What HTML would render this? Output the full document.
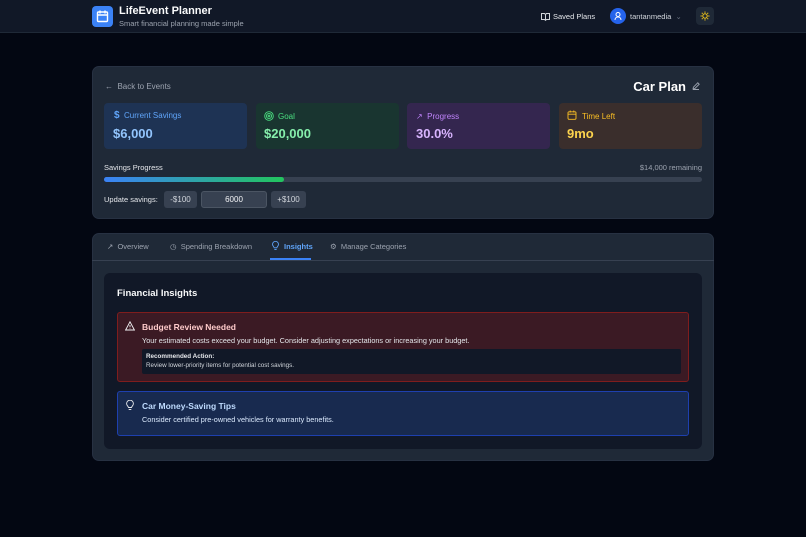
<!DOCTYPE html><html><head><style>
*{box-sizing:border-box;margin:0;padding:0}
body{width:806px;height:537px;background:#030712;font-family:"Liberation Sans",sans-serif;position:relative;overflow:hidden;color:#e5e7eb}
.a{position:absolute;white-space:nowrap}
svg{display:block}
</style></head><body>
<div class="a" style="left:0;top:0;width:806px;height:33px;background:#111827;border-bottom:1px solid #1f2937"></div>
<div class="a" style="left:92px;top:6px;width:21px;height:21px;background:#3b82f6;border-radius:4px"><svg width="21" height="21" viewBox="0 0 21 21" fill="none" stroke="#fff" stroke-width="1.4"><rect x="5.5" y="6" width="10" height="9.5" rx="1"/><path d="M5.5 9h10M8 4.5v3M13 4.5v3"/></svg></div>
<div class="a" style="left:119px;top:5px;font-size:11px;font-weight:bold;color:#f9fafb">LifeEvent Planner</div>
<div class="a" style="left:119px;top:19px;font-size:7.5px;color:#9ca3af">Smart financial planning made simple</div>
<div class="a" style="left:541px;top:12px"><svg width="9" height="9" viewBox="0 0 9 9" fill="none" stroke="#d1d5db" stroke-width="1"><path d="M.5 1.5h3l1 1 1-1h3v6h-3l-1 .8-1-.8h-3zM4.5 2.5v5.5"/></svg></div>
<div class="a" style="left:553px;top:12px;font-size:7.5px;color:#e5e7eb">Saved Plans</div>
<div class="a" style="left:610px;top:8px;width:16px;height:16px;border-radius:50%;background:#2563eb"><svg width="16" height="16" viewBox="0 0 16 16" fill="none" stroke="#fff" stroke-width="1"><circle cx="8" cy="6.5" r="2"/><path d="M5 12c0-2 1.5-3 3-3s3 1 3 3"/></svg></div>
<div class="a" style="left:630px;top:12px;font-size:7.5px;color:#d1d5db">tantanmedia &nbsp;<span style="color:#6b7280">⌄</span></div>
<div class="a" style="left:696px;top:7px;width:18px;height:18px;background:#1f2937;border-radius:4px"><svg width="18" height="18" viewBox="0 0 18 18" fill="none" stroke="#facc15" stroke-width="1"><circle cx="9" cy="9" r="2.2"/><path d="M9 4.5v1.3M9 12.2v1.3M4.5 9h1.3M12.2 9h1.3M5.8 5.8l.9.9M11.3 11.3l.9.9M5.8 12.2l.9-.9M11.3 6.7l.9-.9"/></svg></div>

<div class="a" style="left:92px;top:66px;width:622px;height:153px;background:#1f2937;border-radius:7px;border:1px solid #273142"></div>
<div class="a" style="left:105px;top:82px;font-size:8px;color:#9ca3af">← &nbsp;Back to Events</div>
<div class="a" style="right:120px;top:79px;font-size:13px;font-weight:bold;color:#fff">Car Plan</div>
<div class="a" style="left:692px;top:82px"><svg width="8" height="8" viewBox="0 0 8 8" fill="none" stroke="#9ca3af" stroke-width=".9"><path d="M1 7l.4-1.8L5.8.8l1.4 1.4L2.8 6.6zM1 7.5h6"/></svg></div>

<div class="a" style="left:104px;top:103px;width:143px;height:46px;border-radius:4px;background:#1e3354"></div>
<div class="a" style="left:114px;top:110px;font-size:8px;color:#60a5fa"><b style="font-size:10px">$</b>&nbsp; Current Savings</div>
<div class="a" style="left:113px;top:126px;font-size:13px;font-weight:bold;color:#93c5fd">$6,000</div>
<div class="a" style="left:256px;top:103px;width:143px;height:46px;background:#193530;border-radius:4px"></div>
<div class="a" style="left:264px;top:111px"><svg width="10" height="10" viewBox="0 0 10 10" fill="none" stroke="#4ade80" stroke-width=".9"><circle cx="5" cy="5" r="4.3"/><circle cx="5" cy="5" r="2.6"/><circle cx="5" cy="5" r=".9"/></svg></div>
<div class="a" style="left:278px;top:112px;font-size:8px;color:#4ade80">Goal</div>
<div class="a" style="left:264px;top:126px;font-size:13px;font-weight:bold;color:#86efac">$20,000</div>
<div class="a" style="left:407px;top:103px;width:143px;height:46px;background:#34264f;border-radius:4px"></div>
<div class="a" style="left:416px;top:112px;font-size:8px;color:#c084fc">↗&nbsp; Progress</div>
<div class="a" style="left:416px;top:126px;font-size:13px;font-weight:bold;color:#d8b4fe">30.0%</div>
<div class="a" style="left:559px;top:103px;width:143px;height:46px;background:#3a2e2c;border-radius:4px"></div>
<div class="a" style="left:567px;top:110px"><svg width="10" height="10" viewBox="0 0 10 10" fill="none" stroke="#fbbf24" stroke-width=".9"><rect x="1" y="1.8" width="8" height="7.5" rx="1"/><path d="M1 4.2h8M3.2 .5v2M6.8 .5v2"/></svg></div>
<div class="a" style="left:582px;top:112px;font-size:8px;color:#fbbf24">Time Left</div>
<div class="a" style="left:567px;top:126px;font-size:13px;font-weight:bold;color:#fcd34d">9mo</div>

<div class="a" style="left:104px;top:163px;font-size:7.5px;color:#e5e7eb">Savings Progress</div>
<div class="a" style="right:104px;top:163px;font-size:7.5px;color:#9ca3af">$14,000 remaining</div>
<div class="a" style="left:104px;top:177px;width:598px;height:5px;border-radius:3px;background:#374151"></div>
<div class="a" style="left:104px;top:177px;width:180px;height:5px;border-radius:3px;background:linear-gradient(90deg,#3b82f6,#22c55e)"></div>
<div class="a" style="left:104px;top:195px;font-size:7.5px;color:#e5e7eb">Update savings:</div>
<div class="a" style="left:164px;top:191px;width:33px;height:17px;background:#374151;border-radius:3px;font-size:8px;color:#d1d5db;text-align:center;line-height:17px">-$100</div>
<div class="a" style="left:201px;top:191px;width:66px;height:17px;background:#374151;border:1px solid #4b5563;border-radius:3px;font-size:8px;color:#f3f4f6;text-align:center;line-height:15px">6000</div>
<div class="a" style="left:271px;top:191px;width:35px;height:17px;background:#374151;border-radius:3px;font-size:8px;color:#d1d5db;text-align:center;line-height:17px">+$100</div>

<div class="a" style="left:92px;top:233px;width:622px;height:228px;background:#1f2937;border-radius:7px;border:1px solid #273142"></div>
<div class="a" style="left:92px;top:260px;width:622px;height:1px;background:#374151"></div>
<div class="a" style="left:107px;top:242px;font-size:7.5px;color:#9ca3af">↗&nbsp; Overview</div>
<div class="a" style="left:170px;top:242px;font-size:7.5px;color:#9ca3af">◷&nbsp; Spending Breakdown</div>
<div class="a" style="left:272px;top:241px"><svg width="7" height="10" viewBox="0 0 8 11" fill="none" stroke="#60a5fa" stroke-width="1"><path d="M2.5 7.5C2 6 .6 5.3.6 3.6a3.4 3.4 0 016.8 0c0 1.7-1.4 2.4-1.9 3.9zM2.7 9.5h2.6"/></svg></div>
<div class="a" style="left:284px;top:242px;font-size:7.5px;color:#60a5fa;font-weight:bold">Insights</div>
<div class="a" style="left:270px;top:258px;width:41px;height:2px;background:#3b82f6"></div>
<div class="a" style="left:330px;top:242px;font-size:7.5px;color:#9ca3af">⚙&nbsp; Manage Categories</div>

<div class="a" style="left:104px;top:273px;width:598px;height:176px;background:#111827;border-radius:6px"></div>
<div class="a" style="left:117px;top:288px;font-size:9.5px;font-weight:bold;color:#f9fafb">Financial Insights</div>
<div class="a" style="left:117px;top:312px;width:572px;height:70px;background:#3b1a24;border:1px solid #7f1d1d;border-radius:3px"></div>
<div class="a" style="left:125px;top:321px"><svg width="10" height="10" viewBox="0 0 10 10" fill="none" stroke="#f3f4f6" stroke-width=".9"><path d="M5 .8L9.4 9H.6z M5 4v2.3M5 7.3v.5"/></svg></div>
<div class="a" style="left:142px;top:322px;font-size:8.5px;font-weight:bold;color:#fecaca">Budget Review Needed</div>
<div class="a" style="left:142px;top:336px;font-size:7.3px;color:#e5e7eb">Your estimated costs exceed your budget. Consider adjusting expectations or increasing your budget.</div>
<div class="a" style="left:142px;top:349px;width:539px;height:25px;background:#111827;border-radius:2px"></div>
<div class="a" style="left:146px;top:353px;font-size:6.3px;font-weight:bold;color:#e5e7eb">Recommended Action:</div>
<div class="a" style="left:146px;top:362px;font-size:6.3px;color:#d1d5db">Review lower-priority items for potential cost savings.</div>
<div class="a" style="left:117px;top:391px;width:572px;height:45px;background:#182a4f;border:1px solid #1e40af;border-radius:3px"></div>
<div class="a" style="left:126px;top:400px"><svg width="8" height="11" viewBox="0 0 8 11" fill="none" stroke="#e5e7eb" stroke-width=".9"><path d="M2.5 7.5C2 6 .6 5.3.6 3.6a3.4 3.4 0 016.8 0c0 1.7-1.4 2.4-1.9 3.9zM2.7 9.5h2.6"/></svg></div>
<div class="a" style="left:142px;top:401px;font-size:8.5px;font-weight:bold;color:#bfdbfe">Car Money-Saving Tips</div>
<div class="a" style="left:142px;top:415px;font-size:7.3px;color:#dbeafe">Consider certified pre-owned vehicles for warranty benefits.</div>
</body></html>
